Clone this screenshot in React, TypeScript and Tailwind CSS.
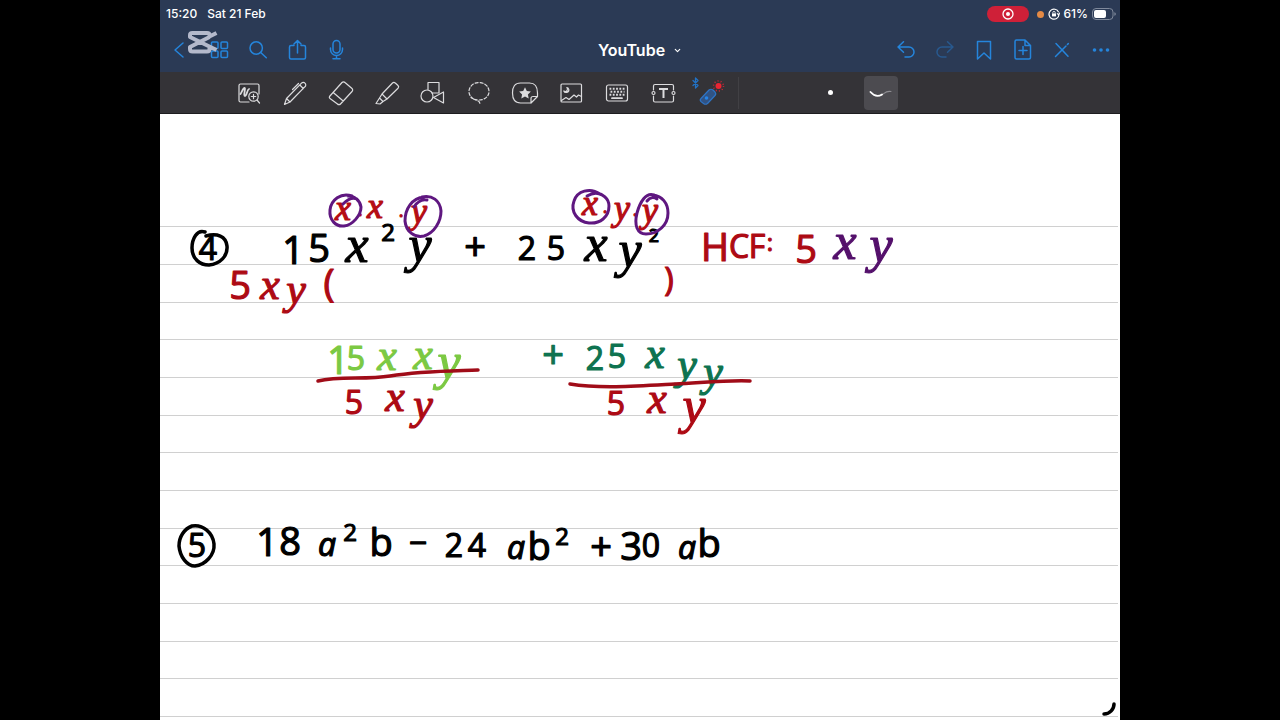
import type { ReactNode } from 'react';
import { ChevronDown } from 'lucide-react';

interface IconButtonProps {
    label: string;
    children: ReactNode;
    disabled?: boolean;
}

const NavButton = ({ label, children, disabled = false }: IconButtonProps) => (
    <button
        type="button"
        aria-label={label}
        disabled={disabled}
        className="flex h-11 w-[39px] items-center justify-center text-[#2585dc] disabled:text-[#28598f]"
    >
        <svg
            className="size-6"
            viewBox="0 0 24 24"
            fill="none"
            stroke="currentColor"
            strokeWidth="1.5"
            strokeLinecap="round"
            strokeLinejoin="round"
        >
            {children}
        </svg>
    </button>
);

const ToolButton = ({ label, children }: IconButtonProps) => (
    <button
        type="button"
        aria-label={label}
        className="flex h-full w-[46px] shrink-0 items-center justify-center text-[#dcdcde]"
    >
        <svg
            className="size-7 overflow-visible"
            viewBox="0 0 28 28"
            fill="none"
            stroke="currentColor"
            strokeWidth="1.2"
            strokeLinecap="round"
            strokeLinejoin="round"
        >
            {children}
        </svg>
    </button>
);

const StatusBar = () => (
    <div className="flex h-7 items-center justify-between pr-1 pl-[6px] text-xs font-medium text-white">
        <div className="flex gap-[10px]">
            <span>15:20</span>
            <span>Sat 21 Feb</span>
        </div>
        <div className="flex items-center gap-1">
            <span className="mr-1 flex h-4 w-[42px] items-center justify-center rounded-full bg-[#cf2038]">
                <svg className="size-3" viewBox="0 0 12 12" fill="none" stroke="white" strokeWidth="1.3">
                    <circle cx="6" cy="6" r="5" />
                    <circle cx="6" cy="6" r="2" fill="white" stroke="none" />
                </svg>
            </span>
            <span className="size-[7px] rounded-full bg-[#e58a45]" />
            <svg className="size-3" viewBox="0 0 12 12" fill="none" stroke="white" strokeWidth="1.2">
                <path d="M10.6 4.2A5 5 0 1 0 11 6.5M11.6 4.6 10.8 7 9 5.4" />
                <rect x="4" y="5.4" width="4" height="3" fill="white" stroke="none" />
                <path d="M4.8 5.4V4.6a1.2 1.2 0 0 1 2.4 0v.8" strokeWidth=".8" />
            </svg>
            <span>61%</span>
            <svg className="h-3 w-6" viewBox="0 0 24 12" fill="none">
                <rect x=".5" y=".5" width="20.5" height="11" rx="3.5" stroke="#7f899b" />
                <rect x="2" y="2" width="12" height="8" rx="2" fill="white" />
                <path d="M22.4 4.2v3.6c1-.4 1.4-1 1.4-1.8s-.4-1.4-1.4-1.8z" fill="#7f899b" />
            </svg>
        </div>
    </div>
);

const NavBar = () => (
    <div className="relative grid h-11 grid-cols-[1fr_auto_1fr] items-center">
        <div className="flex">
            <NavButton label="Back">
                <path d="M15 5 7 12l8 7" />
            </NavButton>
            <NavButton label="Thumbnails">
                <rect x="4.5" y="4" width="6.5" height="6.5" rx="1" />
                <rect x="14" y="4" width="6.5" height="6.5" rx="1" />
                <rect x="4.5" y="13" width="6.5" height="6.5" rx="1" />
                <rect x="14" y="13" width="6.5" height="6.5" rx="1" />
            </NavButton>
            <NavButton label="Search">
                <circle cx="10.2" cy="10" r="6.2" />
                <path d="m15 14.8 5.3 5" />
            </NavButton>
            <NavButton label="Share">
                <path d="M9 7.5H6A1.5 1.5 0 0 0 4.5 9v10.5A1.5 1.5 0 0 0 6 21h13a1.5 1.5 0 0 0 1.5-1.5V9A1.5 1.5 0 0 0 19 7.5h-3M12.5 15V2.5M9 6l3.5-3.5L16 6" />
            </NavButton>
            <NavButton label="Record audio">
                <rect x="9" y="2.5" width="7" height="12.5" rx="3.5" />
                <path d="M6.500 10v1.500a6 6 0 0 0 12 0V10M12.500 17.500v3M9 20.700h7" />
            </NavButton>
        </div>
        <button type="button" className="flex items-center gap-2 text-base font-semibold text-white">
            YouTube
            <ChevronDown className="size-[9px]" strokeWidth={3} />
        </button>
        <div className="flex justify-end">
            <NavButton label="Undo">
                <path d="M9.500 3.800 4 9l5.500 5.200M4 9h11a5 5 0 0 1 0 10h-4" />
            </NavButton>
            <NavButton label="Redo" disabled>
                <path d="M14.500 3.800 20 9l-5.500 5.200M20 9H9a5 5 0 0 0 0 10h4" />
            </NavButton>
            <NavButton label="Bookmark">
                <path d="M5.500 3.500H18.500V21L12 15l-6.500 6z" />
            </NavButton>
            <NavButton label="Add page">
                <path d="M4 3.500A1.500 1.500 0 0 1 5.500 2H14l5.500 5.500V19.500A1.500 1.500 0 0 1 18 21H5.500A1.500 1.500 0 0 1 4 19.500zM14 2v5.500h5.500M12 8.500v8M8 12.500h8" />
            </NavButton>
            <NavButton label="Read only">
                <path d="m6 5.500 12 12.700M5.500 18.500 16 8M17.400 6.500l.9-.9" />
            </NavButton>
            <NavButton label="More">
                <g fill="currentColor" stroke="none">
                    <circle cx="5.500" cy="12" r="1.800" />
                    <circle cx="12" cy="12" r="1.800" />
                    <circle cx="18.500" cy="12" r="1.800" />
                </g>
            </NavButton>
        </div>

        {/* Video editor watermark */}
        <svg
            className="pointer-events-none absolute top-[2px] left-[27px] h-6 w-8 text-[#b4b9cb]"
            viewBox="0 0 32 24"
            fill="none"
            stroke="currentColor"
            strokeWidth="4"
            strokeLinejoin="round"
        >
            <path d="M29.500 3 22.500 6.500V5Q22.500 3 20 3H5.500Q3 3 3 5V7L29.500 20M22.500 17v2Q22.500 21.500 20 21.500H5.500Q3 21.500 3 19V17L22.500 7" />
        </svg>
    </div>
);

const ToolBar = () => (
    <div className="flex h-[42px] items-center border-b border-[#1d1d1f] bg-[#343337] pl-[66px]">
        <ToolButton label="Zoom window">
            <path d="M24 15V6.500A1.500 1.500 0 0 0 22.500 5h-17A1.500 1.500 0 0 0 4 6.500v15A1.500 1.500 0 0 0 5.500 23H14" />
            <path d="M5.500 15c1.500-2 2.500-6 4-6s-1.500 8 .5 8 2-6.500 4-7" strokeWidth="1.800" />
            <circle cx="18.500" cy="17.500" r="4.700" />
            <path d="m22 21 2.500 3M16.300 17.500h4.400M18.500 15.300v4.400" />
        </ToolButton>
        <ToolButton label="Pen">
            <path d="m3.500 25.500 2-6L20.500 4.200a2.400 2.400 0 0 1 3.500 0 2.400 2.400 0 0 1 0 3.500L9 23zM17.500 4.500l-6 6M18.800 6l3.500 3.500M5.500 19.500 9 23" />
        </ToolButton>
        <ToolButton label="Eraser">
            <path d="M2.500 17.500 15 3.500a2 2 0 0 1 3 0l7 6a2 2 0 0 1 0 3L13.500 25a2 2 0 0 1-3 0l-7.500-5.500a1.600 1.600 0 0 1-.5-2zM6.200 13.500l10 8.500" />
        </ToolButton>
        <ToolButton label="Highlighter">
            <path d="m9 15 10.500-11a2 2 0 0 1 2.800 0l2.700 2.500a2 2 0 0 1 0 2.800L14 20zM9 15l-2.500 4 3.500 3.500 4-2.500M6.500 19 3 24.500l4 .5 3-2.500" />
        </ToolButton>
        <ToolButton label="Shapes">
            <path d="M9 10.500V3.500h11v10.500h-7" />
            <circle cx="8" cy="17" r="6" />
            <path d="m14.500 18.500 10-5.500v11z" />
        </ToolButton>
        <ToolButton label="Lasso">
            <path
                d="M8.500 20C5.500 18 4 15.500 4 12.500 4 7.500 8.500 3.500 14 3.500s10 4 10 9-4.500 8.500-10 8.500c-3.500 0-6-1-8-2.500M8.500 20l5.500 2.500 1.500 3"
                strokeDasharray="3 2"
            />
        </ToolButton>
        <ToolButton label="Stickers">
            <path d="M20 24H9.500C4 24 1.500 20.500 1.500 14S4 4 9.500 4h9C24 4 26.500 7.500 26.500 14v3.500L20 24v-4.500q0-2 2-2h4.500" />
            <path
                d="m14 8.300 1.800 3.800 4.100.5-3 2.800.8 4.100-3.700-2-3.700 2 .8-4.100-3-2.800 4.100-.5z"
                fill="currentColor"
                stroke="none"
            />
        </ToolButton>
        <ToolButton label="Image">
            <rect x="4" y="5" width="20.500" height="18" rx="1" />
            <path d="M4.500 21.500l4.500-3 3 2 5-4.500 2.500 2 2-2 3 1.500M9.800 8.500c2 2.500-.5 5-3 3.500 1 2.500 5.500 1.500 5-1.500-.3-1-1-2-2-2z" />
        </ToolButton>
        <ToolButton label="Keyboard">
            <rect x="3.500" y="6" width="21" height="16" rx="2" />
            <path
                d="M6.500 9.800h15.500M7.500 12.800h14M6.500 15.800h15.500"
                strokeWidth="2"
                strokeDasharray="1.800 1.500"
                strokeLinecap="butt"
            />
            <path d="M9 19.200h10" strokeWidth="1.800" />
        </ToolButton>
        <ToolButton label="Text box">
            <path d="M4.500 11V7q0-1.500 1.500-1.500h17Q24.500 5.500 24.500 7v4M24.500 17v4.500q0 1.500-1.500 1.500H6Q4.500 23 4.500 21.500V17" />
            <circle cx="4.500" cy="14" r="1.500" />
            <circle cx="24.500" cy="14" r="1.500" />
            <path d="M10 10h9M14.500 10v9" strokeWidth="2" strokeLinecap="butt" />
        </ToolButton>
        <ToolButton label="Laser pointer">
            <path d="m-2 1.500 5 5L.5 9V-1L3 1.500l-5 5" stroke="#2272c4" strokeWidth="1.300" />
            <path
                d="M6 19.500 14 11q2-1.500 4 0l2 2q1.500 2 0 3.500L12.500 24.500q-2 1.500-4 0l-2.500-2q-1.500-1.500 0-3z"
                fill="#315384"
                stroke="#2e74c6"
            />
            <circle cx="11.500" cy="19" r="1.800" fill="#2585e8" stroke="none" />
            <circle cx="23.500" cy="7" r="3" fill="#ea2433" stroke="none" />
            <circle
                cx="23.500"
                cy="7"
                r="5"
                stroke="#c92835"
                strokeWidth="1.500"
                strokeDasharray="1 2.140"
                strokeLinecap="butt"
            />
        </ToolButton>
        <span className="ml-[6px] h-8 w-px bg-[#414044]" />
        <div className="ml-[74px] flex gap-[17px]">
            <button type="button" aria-label="Dot pointer" className="flex size-[34px] items-center justify-center">
                <span className="size-[5px] rounded-full bg-white" />
            </button>
            <button
                type="button"
                aria-label="Trail pointer"
                aria-pressed="true"
                className="flex size-[34px] items-center justify-center rounded-sm bg-[#4c4b50]"
            >
                <svg className="h-3 w-6" viewBox="0 0 24 12" fill="none" strokeLinecap="round">
                    <path d="M12 8.500c4-2.500 5-5 10-4" stroke="#8d8c91" strokeWidth="1.200" />
                    <path d="M1.500 5C5 9 9 10 13 7.500" stroke="white" strokeWidth="1.800" />
                </svg>
            </button>
        </div>
    </div>
);

const ruleLines = [226, 264, 302, 339, 377, 415, 452, 490, 528, 565, 603, 641, 678, 716];

type Size = 'xs' | 'sm' | 'md' | 'lg';

interface Glyph {
    char: string;
    x: number;
    y: number;
    size?: Size;
}

const digitSizes: Record<Size, string> = {
    xs: 'text-[18px]',
    sm: 'text-[24px]',
    md: 'text-[32px]',
    lg: 'text-[38px]',
};

const letterSizes: Record<Size, string> = {
    xs: 'text-[28px]',
    sm: 'text-[36px]',
    md: 'text-[44px]',
    lg: 'text-[52px]',
};

// Every character sits where the pen put it: x is its middle, y its baseline
const expressions: { ink: string; glyphs: Glyph[] }[] = [
    {
        ink: 'fill-black stroke-black',
        glyphs: [
            { char: '4', x: 208, y: 260, size: 'md' },
            { char: '1', x: 293, y: 264, size: 'lg' },
            { char: '5', x: 319, y: 262, size: 'lg' },
            { char: 'x', x: 357, y: 262, size: 'lg' },
            { char: '2', x: 388, y: 241, size: 'sm' },
            { char: 'y', x: 420, y: 262, size: 'lg' },
            { char: '+', x: 475, y: 260, size: 'lg' },
            { char: '2', x: 527, y: 260, size: 'md' },
            { char: '5', x: 556, y: 260, size: 'md' },
            { char: 'x', x: 596, y: 261, size: 'lg' },
            { char: 'y', x: 630, y: 267, size: 'lg' },
            { char: '2', x: 654, y: 242, size: 'xs' },
        ],
    },
    {
        ink: 'fill-[#b50d14] stroke-[#b50d14]',
        glyphs: [
            { char: 'x', x: 343, y: 220, size: 'sm' },
            { char: '.', x: 360, y: 216, size: 'xs' },
            { char: 'x', x: 375, y: 218, size: 'sm' },
            { char: '.', x: 401, y: 217, size: 'xs' },
            { char: 'y', x: 419, y: 223, size: 'sm' },
        ],
    },
    {
        ink: 'fill-[#b50d14] stroke-[#b50d14]',
        glyphs: [
            { char: 'x', x: 590, y: 215, size: 'sm' },
            { char: '.', x: 605, y: 213, size: 'xs' },
            { char: 'y', x: 622, y: 220, size: 'sm' },
            { char: '.', x: 635, y: 216, size: 'xs' },
            { char: 'y', x: 650, y: 222, size: 'sm' },
        ],
    },
    {
        ink: 'fill-[#ad0a14] stroke-[#ad0a14]',
        glyphs: [
            { char: '5', x: 240, y: 299, size: 'lg' },
            { char: 'x', x: 270, y: 299, size: 'md' },
            { char: 'y', x: 296, y: 304, size: 'md' },
            { char: '(', x: 329, y: 297, size: 'lg' },
            { char: ')', x: 669, y: 291, size: 'md' },
        ],
    },
    {
        ink: 'fill-[#ad0a14] stroke-[#ad0a14]',
        glyphs: [
            { char: 'H', x: 715, y: 261, size: 'lg' },
            { char: 'C', x: 739, y: 258, size: 'md' },
            { char: 'F', x: 757, y: 258, size: 'md' },
            { char: ':', x: 770, y: 251, size: 'sm' },
            { char: '5', x: 806, y: 263, size: 'lg' },
        ],
    },
    {
        ink: 'fill-[#54106b] stroke-[#54106b]',
        glyphs: [
            { char: 'x', x: 845, y: 259, size: 'lg' },
            { char: 'y', x: 881, y: 262, size: 'lg' },
        ],
    },
    {
        ink: 'fill-[#7cc943] stroke-[#7cc943]',
        glyphs: [
            { char: '1', x: 338, y: 374, size: 'lg' },
            { char: '5', x: 356, y: 370, size: 'md' },
            { char: 'x', x: 387, y: 370, size: 'md' },
            { char: 'x', x: 423, y: 369, size: 'md' },
            { char: 'y', x: 449, y: 379, size: 'lg' },
        ],
    },
    {
        ink: 'fill-[#ad0a14] stroke-[#ad0a14]',
        glyphs: [
            { char: '5', x: 354, y: 414, size: 'md' },
            { char: 'x', x: 395, y: 411, size: 'md' },
            { char: 'y', x: 423, y: 419, size: 'md' },
        ],
    },
    {
        ink: 'fill-[#0e7350] stroke-[#0e7350]',
        glyphs: [
            { char: '+', x: 553, y: 368, size: 'lg' },
            { char: '2', x: 595, y: 370, size: 'md' },
            { char: '5', x: 617, y: 368, size: 'md' },
            { char: 'x', x: 655, y: 368, size: 'md' },
            { char: 'y', x: 687, y: 379, size: 'md' },
            { char: 'y', x: 713, y: 386, size: 'md' },
        ],
    },
    {
        ink: 'fill-[#ad0a14] stroke-[#ad0a14]',
        glyphs: [
            { char: '5', x: 616, y: 415, size: 'md' },
            { char: 'x', x: 657, y: 413, size: 'md' },
            { char: 'y', x: 694, y: 423, size: 'lg' },
        ],
    },
    {
        ink: 'fill-black stroke-black',
        glyphs: [
            { char: '5', x: 197, y: 557, size: 'md' },
            { char: '1', x: 267, y: 556, size: 'lg' },
            { char: '8', x: 290, y: 555, size: 'lg' },
            { char: 'a', x: 327, y: 556, size: 'md' },
            { char: '2', x: 350, y: 541, size: 'sm' },
            { char: 'b', x: 381, y: 556, size: 'lg' },
            { char: '−', x: 418, y: 554, size: 'md' },
            { char: '2', x: 454, y: 557, size: 'md' },
            { char: '4', x: 477, y: 557, size: 'md' },
            { char: 'a', x: 516, y: 559, size: 'md' },
            { char: 'b', x: 539, y: 560, size: 'lg' },
            { char: '2', x: 562, y: 545, size: 'sm' },
            { char: '+', x: 601, y: 560, size: 'lg' },
            { char: '3', x: 631, y: 560, size: 'lg' },
            { char: '0', x: 651, y: 557, size: 'md' },
            { char: 'a', x: 687, y: 559, size: 'md' },
            { char: 'b', x: 709, y: 557, size: 'lg' },
        ],
    },
];

const glyphClass = ({ char, size = 'md' }: Glyph) => {
    if (/[xy]/.test(char)) {
        return `font-['Liberation_Serif',serif] italic ${letterSizes[size]}`;
    }
    if (char === 'a') {
        return `font-['Open_Sans',sans-serif] italic ${digitSizes[size]}`;
    }
    return `font-['Open_Sans',sans-serif] ${digitSizes[size]}`;
};

const NotePage = () => (
    <main className="grow bg-white">
        <svg className="block h-auto w-full" viewBox="160 114 960 606">
            <g stroke="#d0d0d0" strokeWidth="1.2">
                {ruleLines.map((y) => (
                    <line key={y} x1="160" x2="1118" y1={y + 0.5} y2={y + 0.5} />
                ))}
            </g>

            {/* The outline thickens the type to the weight of the pen */}
            <g strokeWidth="1.2" strokeLinejoin="round" textAnchor="middle">
                {expressions.map(({ ink, glyphs }, i) => (
                    <text key={i} className={ink}>
                        {glyphs.map((glyph, j) => (
                            <tspan key={j} x={glyph.x} y={glyph.y} className={glyphClass(glyph)}>
                                {glyph.char}
                            </tspan>
                        ))}
                    </text>
                ))}
            </g>

            <g fill="none" strokeWidth="3.5" strokeLinecap="round" strokeLinejoin="round">
                {/* Rings round the question numbers */}
                <path
                    stroke="black"
                    d="M205 232C197 229 192 239 192 248 192 259 200 265 209 265 220 264 228 256 227 246 226 236 217 233 206 236"
                />
                <path
                    stroke="black"
                    d="M192 526C184 529 179 537 179 546 180 557 187 566 195 566 205 565 215 555 214 544 213 533 203 524 192 526"
                />

                {/* Rings round the common factors */}
                <g stroke="#5f1780" strokeWidth="3">
                    <path d="M343 204C348 199 353 197 357 199M352 196C341 192 331 200 330 210 329 220 336 227 344 226 353 225 361 215 361 207 360 200 354 196 348 196" />
                    <path d="M414 207C417 202 422 199 427 200M424 197C412 198 405 209 405 221 406 232 415 238 424 236 434 233 441 222 441 211 440 200 432 195 422 197" />
                    <path d="M587 196C592 193 597 192 602 195M600 194C590 187 577 191 574 201 570 212 578 222 589 223 600 224 609 217 609 206 609 198 602 194 597 193" />
                    <path d="M647 201C650 197 654 197 657 199M654 195C646 192 640 202 637 213 634 225 637 234 646 234 658 234 668 225 668 213 668 203 662 196 653 195" />
                </g>

                {/* Fraction bars */}
                <g stroke="#a00c18">
                    <path d="M318 381C340 376 365 380 390 376 420 371 450 371 478 370" />
                    <path d="M570 384C600 389 640 386 675 384 700 383 725 380 750 381" />
                </g>

                <path stroke="black" d="M1114 704C1114 709 1110 714 1104 714" />
            </g>
        </svg>
    </main>
);

export default function App() {
    return (
        <div className="flex min-h-screen justify-center bg-black">
            <div className="flex w-full max-w-[960px] flex-col font-['Inter',sans-serif]">
                <header>
                    <div className="bg-[#2b3a55]">
                        <StatusBar />
                        <NavBar />
                    </div>
                    <ToolBar />
                </header>
                <NotePage />
            </div>
        </div>
    );
}
